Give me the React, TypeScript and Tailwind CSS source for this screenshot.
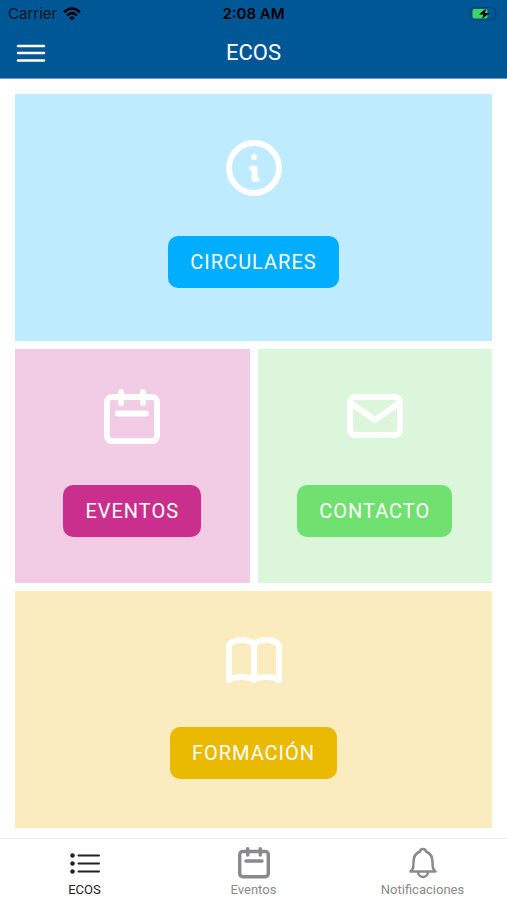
import type { ReactNode } from "react";
import { clsx } from "clsx";

function CalendarIcon({ className }: { className: string }) {
  return (
    <svg viewBox="0 0 56 56" className={className} fill="none" stroke="currentColor" strokeWidth="6" strokeLinecap="round" aria-hidden="true">
      <rect x="3" y="8" width="50" height="44" rx="5" />
      <path d="M17 3v11M39 3v11M14 24.500h28" />
    </svg>
  );
}

function InfoIcon() {
  return (
    <svg viewBox="0 0 56 56" className="size-14" fill="none" stroke="currentColor" aria-hidden="true">
      <circle cx="28" cy="28" r="25" strokeWidth="6" />
      <circle cx="28" cy="17" r="3" fill="currentColor" stroke="none" />
      <path d="M25 28h3.500v11.500h3" strokeWidth="4.500" strokeLinecap="round" strokeLinejoin="round" />
      <path d="M28.500 28.500v10.500" strokeWidth="6" strokeLinecap="round" />
    </svg>
  );
}

function MailIcon() {
  return (
    <svg viewBox="0 0 56 56" className="size-14" fill="none" stroke="currentColor" strokeWidth="6" strokeLinejoin="round" aria-hidden="true">
      <rect x="3" y="8" width="50" height="38" rx="5" />
      <path d="M3 13.500 28 31 53 13.500" />
    </svg>
  );
}

function BookIcon() {
  return (
    <svg viewBox="0 0 56 56" className="size-14" fill="none" stroke="currentColor" strokeWidth="6" strokeLinecap="round" strokeLinejoin="round" aria-hidden="true">
      <path d="M28 13C24 10 20 9 16 9 10 9 3 11.500 3 15v34c5-4 20-4 25 0 5-4 20-4 25 0V15c0-3.500-7-6-13-6-4 0-8 1-12 4zv36" />
    </svg>
  );
}

function Card({ title, icon, className, button }: { title: string; icon: ReactNode; className: string; button: string }) {
  return (
    <section className={clsx("flex flex-col items-center gap-10 text-white", className)}>
      {icon}
      <button type="button" className={clsx("h-[52px] rounded-[10px] px-[22px] text-xl tracking-wider", button)}>
        {title}
      </button>
    </section>
  );
}

export default function App() {
  return (
    <div className="flex min-h-screen flex-col bg-white font-[Roboto,sans-serif]">
      {/* Header */}
      <header className="border-b border-[#6ba2ca] bg-[#005796]">
        <div className="grid h-7 grid-cols-3 items-center px-2 font-[Inter,sans-serif] text-[15px] text-[#071523]">
          <div className="flex items-center gap-1.5">
            <span>Carrier</span>
            <svg viewBox="0 0 18 14" className="h-[14px] w-[18px] text-black" fill="none" stroke="currentColor" strokeWidth="2.600" aria-hidden="true">
              <path d="M1 5.200Q9-2.200 17 5.200M4 8.400Q9 3.800 14 8.400" />
              <path d="M6.300 10.700Q9 8.500 11.700 10.700L9 13.500z" fill="currentColor" stroke="none" />
            </svg>
          </div>
          <span className="text-center font-semibold text-black">2:08 AM</span>
          <svg viewBox="0 0 30 14" className="h-[14px] w-[30px] justify-self-end" aria-hidden="true">
            <rect x="1.500" y="0.500" width="25" height="12.500" rx="4" fill="none" stroke="#084169" />
            <rect x="3.500" y="2" width="15" height="9.500" rx="2" fill="#3fd267" />
            <path d="M28 4.500q3 2.200 0 4.500z" fill="#084169" />
            <path d="M17 1.500 10 7.500h4.500l-1.500 4.500 7.500-6h-4.500z" fill="#000" />
          </svg>
        </div>
        <div className="grid h-[50px] grid-cols-3 items-center px-4 text-white">
          <button type="button" aria-label="Abrir menú">
            <svg viewBox="0 0 30 20" className="h-5 w-[30px]" stroke="currentColor" strokeWidth="2.500" strokeLinecap="round" aria-hidden="true">
              <path d="M2 3h26M2 10h26M2 17.500h26" />
            </svg>
          </button>
          <h1 className="text-center text-[22px] leading-7">ECOS</h1>
        </div>
      </header>

      {/* Cards */}
      <main className="grid flex-1 grid-cols-2 content-start gap-2 px-[15px] pt-[15px] pb-[10px]">
        <Card title="CIRCULARES" icon={<InfoIcon />} className="col-span-2 bg-[#bfebff] pt-[46px] pb-[53px]" button="bg-[#00adff]" />
        <Card title="EVENTOS" icon={<CalendarIcon className="size-14" />} className="bg-[#f2cbe4] pt-10 pb-[46px]" button="bg-[#cb2f8e]" />
        <Card title="CONTACTO" icon={<MailIcon />} className="bg-[#dbf6db] pt-10 pb-[46px]" button="bg-[#70e070]" />
        <Card title="FORMACIÓN" icon={<BookIcon />} className="col-span-2 bg-[#faecbf] pt-10 pb-[49px]" button="bg-[#e9ba00]" />
      </main>

      {/* Tab bar */}
      <nav className="grid h-[62px] grid-cols-3 border-t border-[#eeeeee] text-[13px] leading-4 text-[#8a8a8d]">
        <a href="#ecos" aria-current="page" className="flex flex-col items-center gap-[3px] pt-2 text-[#222222]">
          <svg viewBox="0 0 32 32" className="size-8" fill="currentColor" stroke="currentColor" strokeWidth="2" strokeLinecap="round" aria-hidden="true">
            <path d="M9.500 8.500h20.500M9.500 16.500h20.500M9.500 24.500h20.500" />
            <circle cx="3.500" cy="8.500" r="1.300" />
            <circle cx="3.500" cy="16.500" r="1.300" />
            <circle cx="3.500" cy="24.500" r="1.300" />
          </svg>
          <span>ECOS</span>
        </a>
        <a href="#eventos" className="flex flex-col items-center gap-[3px] pt-2">
          <CalendarIcon className="size-8" />
          <span>Eventos</span>
        </a>
        <a href="#notificaciones" className="flex flex-col items-center gap-[3px] pt-2">
          <svg viewBox="0 0 32 32" className="size-8" fill="none" stroke="currentColor" strokeWidth="2.500" strokeLinecap="round" strokeLinejoin="round" aria-hidden="true">
            <path d="M3.500 24.500c2.500-2 3-3.500 3-9.500 0-5.500 2.500-9 6.500-10.500 .5-3.500 5.500-3.500 6 0 4 1.500 6.500 5 6.500 10.500 0 6 .5 7.500 3 9.500z" />
            <path d="M11 25c.5 6.500 9.500 6.500 10 0" />
          </svg>
          <span>Notificaciones</span>
        </a>
      </nav>
    </div>
  );
}
